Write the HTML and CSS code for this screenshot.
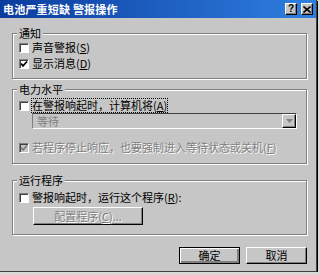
FILE: index.html
```html
<!DOCTYPE html>
<html lang="zh-CN">
<head>
    <meta charset="utf-8">
    <title>电池严重短缺 警报操作</title>
    <link rel="stylesheet" href="styles.css">
</head>
<body>
    <div class="window">
        <div class="titlebar">
            <span class="title">电池严重短缺 警报操作</span>
            <div class="title-buttons">
                <span class="tbtn help">?</span>
                <span class="tbtn">
                    <svg width="8" height="7" viewBox="0 0 8 7"><path d="M0.5 0.5 L7.5 6.5 M7.5 0.5 L0.5 6.5" stroke="#000" stroke-width="1.6"/></svg>
                </span>
            </div>
        </div>

        <div class="content">
            <!-- 通知 -->
            <div class="group g-notify">
                <div class="group-title">通知</div>
                <div class="row r-first">
                    <span class="check"></span>
                    <span>声音警报(<u>S</u>)</span>
                </div>
                <div class="row r-second">
                    <span class="check">
                        <svg width="8" height="8" viewBox="0 0 8 8"><path d="M1 3.5 L3 5.8 L7 1.5" fill="none" stroke="#000" stroke-width="1.8"/></svg>
                    </span>
                    <span>显示消息(<u>D</u>)</span>
                </div>
            </div>

            <!-- 电力水平 -->
            <div class="group g-power">
                <div class="group-title">电力水平</div>
                <div class="row r-power">
                    <span class="check"></span>
                    <span class="focus">在警报响起时，计算机将(<u>A</u>)</span>
                </div>
                <div class="combo">
                    <span class="combo-text">等待</span>
                    <span class="combo-btn">
                        <svg width="7" height="4" viewBox="0 0 7 4"><path d="M0 0 H7 L3.5 4 Z" fill="#808080"/></svg>
                    </span>
                </div>
                <div class="row r-force disabled">
                    <span class="check off">
                        <svg width="8" height="8" viewBox="0 0 8 8"><path d="M1 3.5 L3 5.8 L7 1.5" fill="none" stroke="#808080" stroke-width="1.8"/></svg>
                    </span>
                    <span>若程序停止响应，也要强制进入等待状态或关机(<u>F</u>)</span>
                </div>
            </div>

            <!-- 运行程序 -->
            <div class="group g-run">
                <div class="group-title">运行程序</div>
                <div class="row r-run">
                    <span class="check"></span>
                    <span>警报响起时，运行这个程序(<u>R</u>):</span>
                </div>
                <div class="btn btn-config disabled">配置程序(<u>C</u>)...</div>
            </div>

            <div class="footer">
                <div class="btn default">确定</div>
                <div class="btn">取消</div>
            </div>
        </div>
    </div>
</body>
</html>
```

FILE: styles.css
```css
body {
    margin: 0;
    background-color: #d8d8d8;
    font-family: "Noto Sans CJK SC", "Liberation Sans", sans-serif;
    font-size: 11px;
    line-height: 13px;
    color: #000;
}
.window {
    width: 316px;
    height: 271px;
    background-color: #c6c6c6;
    border-right: 1px solid #404040;
    border-bottom: 1px solid #404040;
    box-shadow: 1px 1px 0 #000;
    display: flex;
    flex-direction: column;
}
.titlebar {
    height: 18px;
    padding: 0 3px;
    display: flex;
    align-items: center;
    justify-content: space-between;
    background: linear-gradient(to right, #0b3c9e, #2f7fe0);
}
.title {
    color: #fff;
    font-weight: bold;
    letter-spacing: 0.2px;
}
.title-buttons {
    display: flex;
    gap: 4px;
}
.tbtn {
    width: 10px;
    height: 10px;
    background-color: #c6c6c6;
    border-top: 1px solid #fff;
    border-left: 1px solid #fff;
    border-right: 1px solid #000;
    border-bottom: 1px solid #000;
    box-shadow: inset -1px -1px 0 #808080;
    display: flex;
    align-items: center;
    justify-content: center;
    font-family: "Liberation Sans", sans-serif;
    font-weight: bold;
    font-size: 10px;
    line-height: 10px;
}
.content {
    padding: 15px 9px 0 12px;
    display: flex;
    flex-direction: column;
}
/* etched group box */
.group {
    box-sizing: border-box;
    border: 1px solid #808080;
    box-shadow: inset 1px 1px 0 #fff, 1px 1px 0 #fff;
    display: flex;
    flex-direction: column;
    align-items: flex-start;
}
.group-title {
    margin: -7px 0 0 4px;
    padding: 0 2px;
    background-color: #c6c6c6;
}
.g-notify {
    height: 46px;
}
.g-power {
    height: 75px;
    margin-top: 10px;
}
.g-run {
    height: 55px;
    margin-top: 16px;
}
.row {
    display: flex;
    align-items: center;
    gap: 3px;
    padding-left: 6px;
}
.r-first { margin-top: 1px; }
.r-second { margin-top: 3px; }
.r-power { margin-top: 3px; }
.r-force { margin-top: 12px; }
.r-run { margin-top: 4px; }
.check {
    box-sizing: border-box;
    width: 10px;
    height: 10px;
    background-color: #fff;
    border-top: 1px solid #808080;
    border-left: 1px solid #808080;
    border-right: 1px solid #fff;
    border-bottom: 1px solid #fff;
    box-shadow: inset 1px 1px 0 #404040;
    display: flex;
    align-items: center;
    justify-content: center;
}
.check.off {
    background-color: #c6c6c6;
}
.focus {
    outline: 1px dotted #000;
    outline-offset: 0;
}
.disabled {
    color: #808080;
    text-shadow: 1px 1px 0 #fff;
}
.combo {
    box-sizing: border-box;
    width: 265px;
    height: 16px;
    margin: 1px 0 0 19px;
    border-top: 1px solid #404040;
    border-left: 1px solid #808080;
    border-right: 1px solid #fff;
    border-bottom: 1px solid #fff;
    display: flex;
    align-items: center;
    justify-content: space-between;
}
.combo-text {
    padding-left: 4px;
    color: #808080;
}
.combo-btn {
    box-sizing: border-box;
    width: 14px;
    height: 14px;
    background-color: #c6c6c6;
    border-top: 1px solid #fff;
    border-left: 1px solid #fff;
    border-right: 1px solid #000;
    border-bottom: 1px solid #000;
    box-shadow: inset -1px -1px 0 #808080;
    display: flex;
    align-items: center;
    justify-content: center;
}
.btn {
    box-sizing: border-box;
    width: 61px;
    height: 17px;
    background-color: #c6c6c6;
    border-top: 1px solid #fff;
    border-left: 1px solid #fff;
    border-right: 1px solid #000;
    border-bottom: 1px solid #000;
    box-shadow: inset -1px -1px 0 #808080;
    display: flex;
    align-items: center;
    justify-content: center;
}
.btn.default {
    border: 1px solid #000;
    box-shadow: inset 1px 1px 0 #fff, inset -2px -2px 0 #808080;
}
.btn-config {
    width: 110px;
    height: 18px;
    margin: 3px 0 0 20px;
}
.footer {
    margin-top: 12px;
    display: flex;
    justify-content: flex-end;
    gap: 6px;
}
```
